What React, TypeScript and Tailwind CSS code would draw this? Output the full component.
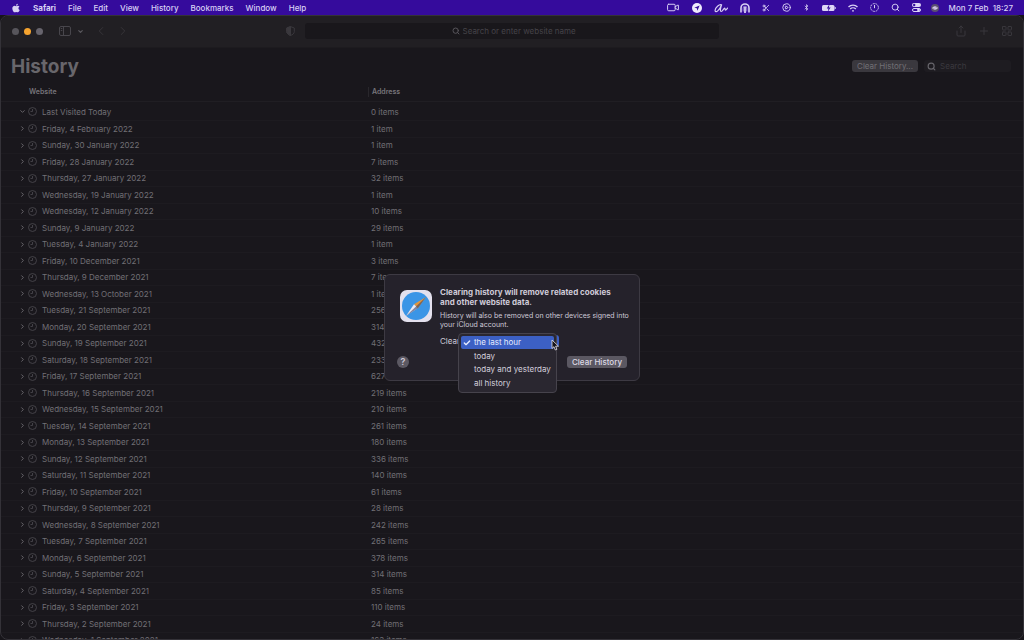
import type { ReactNode } from "react";
import {
  Bluetooth,
  Check,
  ChevronDown,
  ChevronLeft,
  ChevronRight,
  CirclePlay,
  History,
  LayoutGrid,
  Plus,
  Scissors,
  Search,
  Share,
  Video,
} from "lucide-react";
import { FaApple } from "react-icons/fa";

const menus = ["File", "Edit", "View", "History", "Bookmarks", "Window", "Help"];

const days: [string, number][] = [
  ["Last Visited Today", 0],
  ["Friday, 4 February 2022", 1],
  ["Sunday, 30 January 2022", 1],
  ["Friday, 28 January 2022", 7],
  ["Thursday, 27 January 2022", 32],
  ["Wednesday, 19 January 2022", 1],
  ["Wednesday, 12 January 2022", 10],
  ["Sunday, 9 January 2022", 29],
  ["Tuesday, 4 January 2022", 1],
  ["Friday, 10 December 2021", 3],
  ["Thursday, 9 December 2021", 7],
  ["Wednesday, 13 October 2021", 1],
  ["Tuesday, 21 September 2021", 256],
  ["Monday, 20 September 2021", 314],
  ["Sunday, 19 September 2021", 432],
  ["Saturday, 18 September 2021", 233],
  ["Friday, 17 September 2021", 627],
  ["Thursday, 16 September 2021", 219],
  ["Wednesday, 15 September 2021", 210],
  ["Tuesday, 14 September 2021", 261],
  ["Monday, 13 September 2021", 180],
  ["Sunday, 12 September 2021", 336],
  ["Saturday, 11 September 2021", 140],
  ["Friday, 10 September 2021", 61],
  ["Thursday, 9 September 2021", 28],
  ["Wednesday, 8 September 2021", 242],
  ["Tuesday, 7 September 2021", 265],
  ["Monday, 6 September 2021", 378],
  ["Sunday, 5 September 2021", 314],
  ["Saturday, 4 September 2021", 85],
  ["Friday, 3 September 2021", 110],
  ["Thursday, 2 September 2021", 24],
  ["Wednesday, 1 September 2021", 163],
];

const ranges = ["the last hour", "today", "today and yesterday", "all history"];

function MenuBar() {
  return (
    <header className="flex h-[15px] shrink-0 items-center bg-[#350b9c] pr-[11px] pl-[11px] text-[8px] leading-[14px] font-medium text-[#d8d0f4]">
      <nav className="flex items-center gap-3" aria-label="Menu bar">
        <button type="button" aria-label="Apple menu">
          <FaApple className="size-[10px]" />
        </button>
        <button type="button" className="font-bold">
          Safari
        </button>
        {menus.map((menu) => (
          <button key={menu} type="button">
            {menu}
          </button>
        ))}
      </nav>
      <div className="ml-auto flex items-center gap-3">
        <Video className="h-[13px] w-[14px]" strokeWidth={1.8} />
        <svg viewBox="0 0 10 10" className="size-[10px]">
          <circle cx="5" cy="5" r="5" fill="#efeafc" />
          <path d="M7.6 2.5 5.4 7.8 4.8 5.3 2.3 4.7z" fill="#350b9c" />
        </svg>
        <svg
          viewBox="0 0 14 10"
          className="h-[10px] w-[14px]"
          fill="none"
          stroke="currentColor"
          strokeWidth="1.2"
          strokeLinecap="round"
          strokeLinejoin="round"
        >
          <path d="M7.5 1.8C5.2.9 1.3 4.6 1.1 7.3c-.1 1.700 1.300 1.800 2.600.6C5.300 6.500 6.800 4 7.600 1.800 6.600 4.500 5.700 8.300 7.200 8.500c1.500.1 2.400-3.300 3.500-3.300.8.1-.1 1.800.8 1.900.7 0 1.200-.9 2-2" />
        </svg>
        <svg viewBox="0 0 10 10" className="size-[10px]" fill="none" stroke="currentColor">
          <path d="M1 9.500V5a4 4 0 0 1 8 0v4.500" strokeWidth="1.600" />
          <path d="M3.200 8.500V5a1.800 1.800 0 0 1 3.600 0v3.500" strokeWidth=".6" />
          <path d="M5 4v6" strokeWidth="1.800" />
        </svg>
        <Scissors className="size-2" strokeWidth={2.5} />
        <CirclePlay className="size-[9px]" strokeWidth={2.5} />
        <Bluetooth className="h-[9px] w-[7px]" strokeWidth={2.5} />
        <svg viewBox="0 0 14 8" className="h-2 w-[14px]">
          <rect x="0" y="1" width="12.500" height="6" rx="1.500" fill="#ddd5f7" />
          <path d="M13.200 3v2" stroke="#ddd5f7" />
          <path d="M7.500 0 4.800 4.500h1.700L5.600 8l3-4.500H6.900z" fill="#350b9c" />
        </svg>
        <svg viewBox="0 0 10 8" className="h-2 w-[10px]" fill="none" stroke="currentColor" strokeWidth="1.400">
          <path d="M.5 3a6.400 6.400 0 0 1 9 0M2.200 5a4 4 0 0 1 5.600 0" />
          <circle cx="5" cy="6.800" r=".9" fill="currentColor" stroke="none" />
        </svg>
        <svg viewBox="0 0 9 9" className="size-[9px]" fill="none" stroke="currentColor">
          <circle cx="4.500" cy="4.500" r="3.900" strokeWidth=".9" strokeDasharray="2 .7" />
          <path d="M4.500 2v3.200" />
        </svg>
        <Search className="size-[9px]" strokeWidth={2.5} />
        <div className="flex items-center gap-[10px]">
          <svg viewBox="0 0 9 9" className="size-[9px]">
            <rect x="0" y="0" width="9" height="4" rx="2" fill="#ddd5f7" />
            <circle cx="2.200" cy="2" r="1.200" fill="#350b9c" />
            <rect x=".5" y="5.500" width="8" height="3" rx="1.500" fill="none" stroke="#ddd5f7" />
            <circle cx="6.500" cy="7" r="1.400" fill="#ddd5f7" />
          </svg>
          <svg viewBox="0 0 8 8" className="size-2">
            <circle cx="4" cy="4" r="4" fill="#5a5070" />
            <circle cx="4" cy="4" r="2" fill="#b9a9cf" />
            <path d="M1 4.500C3 2 5 6 7 3.500" stroke="#e3d8f5" fill="none" />
          </svg>
          <time className="whitespace-pre">Mon 7 Feb  18:27</time>
        </div>
      </div>
    </header>
  );
}

function ToolButton({ label, children }: { label: string; children: ReactNode }) {
  return (
    <button type="button" aria-label={label} className="flex items-center justify-center">
      {children}
    </button>
  );
}

function Toolbar() {
  return (
    <div className="flex h-8 shrink-0 items-center border-b border-[#1d1b1f] bg-[#211f23] pb-px text-[#39373c]">
      <div className="flex w-[304px] shrink-0 items-center pl-[11px]">
        <div className="flex gap-[5px]">
          <button type="button" aria-label="Close" className="size-[7px] rounded-full bg-[#57555b]" />
          <button type="button" aria-label="Minimise" className="size-[7px] rounded-full bg-[#f5a32f]" />
          <button type="button" aria-label="Zoom" className="size-[7px] rounded-full bg-[#67646d]" />
        </div>
        <div className="ml-4 flex items-center gap-[6px]">
          <ToolButton label="Sidebar">
            <svg viewBox="0 0 12 10" className="h-[10px] w-3" fill="none" stroke="#48464c">
              <rect x=".5" y=".5" width="11" height="9" rx="1.500" />
              <path d="M4.500.5v9M1.800 2.500h1.500M1.800 4.500h1.500" />
            </svg>
          </ToolButton>
          <ToolButton label="Sidebar options">
            <ChevronDown className="size-[7px] text-[#5a585e]" strokeWidth={4} />
          </ToolButton>
        </div>
        <div className="ml-[10px] flex items-center gap-2">
          <ToolButton label="Back">
            <ChevronLeft className="size-[14px]" strokeWidth={1.5} />
          </ToolButton>
          <ToolButton label="Forward">
            <ChevronRight className="size-[14px]" strokeWidth={1.5} />
          </ToolButton>
        </div>
        <div className="mr-[10px] ml-auto">
          <ToolButton label="Privacy report">
            <svg viewBox="0 0 9 10" className="h-[10px] w-[9px]" stroke="#3a383d">
              <path d="M4.500.6 8.300 2v3.500c0 2-1.800 3.300-3.800 4-2-.7-3.800-2-3.800-4V2z" fill="none" />
              <path d="M4.500.6v8.900c-2-.7-3.800-2-3.800-4V2z" fill="#3a383d" />
            </svg>
          </ToolButton>
        </div>
      </div>
      <label className="flex h-4 min-w-0 flex-1 items-center justify-center gap-[3px] rounded-[3px] bg-[#19171b] pl-[6px]">
        <Search className="size-2 text-[#57555b]" strokeWidth={3} />
        <input
          type="text"
          aria-label="Address"
          placeholder="Search or enter website name"
          className="w-[116px] bg-transparent text-[8px] leading-3 outline-none placeholder:text-[#454349]"
        />
      </label>
      <div className="flex w-[304px] shrink-0 items-center justify-end gap-[11px] pr-[10px]">
        <ToolButton label="Share">
          <Share className="size-3" strokeWidth={2} />
        </ToolButton>
        <ToolButton label="New tab">
          <Plus className="size-3" strokeWidth={2} />
        </ToolButton>
        <ToolButton label="Tab overview">
          <LayoutGrid className="size-3" strokeWidth={2} />
        </ToolButton>
      </div>
    </div>
  );
}

function ClockIcon() {
  return (
    <svg viewBox="0 0 10 10" className="size-[9px]" fill="none" stroke="#4e4c52">
      <circle cx="5" cy="5" r="4.400" strokeWidth=".9" />
      <path d="M5 2.200V5H2.800" strokeWidth=".9" />
    </svg>
  );
}

function HistoryTable() {
  return (
    <table className="w-full table-fixed border-collapse text-[8px] text-[#716f75]">
      <thead>
        <tr className="h-[17px] border-b border-[#201e23] text-left text-[7px] leading-[10px] text-[#77757b]">
          <th className="w-[367px] p-0 pl-7 font-semibold">Website</th>
          <th className="p-0 font-semibold">
            <span className="block border-l border-[#29272c] pl-[3px]">Address</span>
          </th>
        </tr>
      </thead>
      <tbody>
        <tr className="h-[3px]">
          <td className="p-0" />
          <td className="p-0" />
        </tr>
        {days.map(([day, count], i) => (
          <tr key={day} className="h-4 border-b border-[#1d1b20] leading-[14px] odd:h-[17px]">
            <td className="p-0 pl-[18px]">
              <div className="flex items-center">
                <button type="button" aria-label={`Expand ${day}`}>
                  {i === 0 ? (
                    <ChevronDown className="size-[7px]" strokeWidth={3} />
                  ) : (
                    <ChevronRight className="size-[7px]" strokeWidth={3} />
                  )}
                </button>
                <span className="mr-[5px] ml-[2px]">
                  <ClockIcon />
                </span>
                {day}
              </div>
            </td>
            <td className="p-0 pl-[3px]">
              {count} {count === 1 ? "item" : "items"}
            </td>
          </tr>
        ))}
      </tbody>
    </table>
  );
}

function SafariIcon() {
  return (
    <svg viewBox="0 0 32 32" className="ml-[3px] size-8 shrink-0">
      <rect width="32" height="32" rx="7" fill="#e4e1ee" />
      <circle cx="16" cy="16" r="14" fill="#3b95e6" />
      <path d="M26 7 17.800 18.300 14 14.300z" fill="#e3963c" />
      <path d="M6 26 14 14.300 17.800 18.300z" fill="#eceaf5" />
      <path d="M26 7 6 26l11.800-7.700z" fill="#3a4168" fillOpacity=".6" />
    </svg>
  );
}

function RangeMenu() {
  return (
    <div
      role="menu"
      className="absolute -top-[1px] left-[18px] z-10 w-[99px] rounded-[4px] border border-[#46434c] bg-[#2a2730] p-[2px] text-[#d3cfdc]"
    >
      {ranges.map((range, i) => (
        <button
          key={range}
          type="button"
          role="menuitem"
          className="flex h-[13px] w-full items-center gap-[3px] rounded-[2px] pl-[2px] text-left leading-[13px] odd:mb-[1px] first:bg-[#3c60c4] first:text-[#e6ecff]"
        >
          <span className="w-2">{i === 0 && <Check className="size-2" strokeWidth={4} />}</span>
          {range}
        </button>
      ))}
    </div>
  );
}

function ClearDialog() {
  return (
    <section
      role="dialog"
      aria-labelledby="clear-title"
      className="flex w-64 gap-2 rounded-md border border-[#3d3a43] bg-[#25222b] pt-3 pr-2 pb-3 pl-3 text-[#cfcad8]"
    >
      <div className="flex flex-col justify-between pt-[3px]">
        <SafariIcon />
        <button
          type="button"
          aria-label="Help"
          className="flex size-3 items-center justify-center self-start rounded-full bg-[#5c5963] text-[9px] leading-3 font-semibold"
        >
          ?
        </button>
      </div>
      <div className="min-w-0 flex-1">
        <h2 id="clear-title" className="pr-4 text-[8px] leading-[10px] font-bold">
          Clearing history will remove related cookies and other website data.
        </h2>
        <p className="mt-1 text-[7px] leading-[9px]">
          History will also be removed on other devices signed into your iCloud account.
        </p>
        <div className="relative mt-[5px] flex items-center text-[8px] leading-[14px]">
          <label htmlFor="range" className="w-5">
            Clear
          </label>
          <select
            id="range"
            className="h-3 w-[99px] appearance-none rounded-[3px] bg-[#3c60c4] pl-[11px] leading-3 text-[#e8e6f2]"
          >
            {ranges.map((range) => (
              <option key={range}>{range}</option>
            ))}
          </select>
          <RangeMenu />
          <svg viewBox="0 0 8 12" className="absolute top-[5px] left-[111px] z-20 h-3 w-2">
            <path
              d="M1 1v8.500l2-1.800 1.300 3.300 1.600-.7-1.300-3.100H7.500z"
              fill="#17151b"
              stroke="#e6e4ec"
              strokeWidth=".8"
            />
          </svg>
        </div>
        <div className="mt-2 flex justify-end pr-1">
          <button
            type="button"
            className="h-3 w-[60px] rounded-[3px] bg-[#5b5862] text-[8px] leading-3 font-medium text-[#dedae6]"
          >
            Clear History
          </button>
        </div>
      </div>
    </section>
  );
}

export default function App() {
  return (
    <div className="flex h-screen flex-col overflow-hidden bg-[#17151a] font-['Inter',sans-serif]">
      <MenuBar />
      <main className="relative flex min-h-0 flex-1 flex-col overflow-hidden rounded-lg border border-[#343238] bg-[#19171c]">
        <Toolbar />
        <div className="flex h-9 shrink-0 items-center pr-3 pl-[10px]">
          <h1 className="pt-px text-[19px] leading-6 font-bold text-[#68666b]">History</h1>
          <button
            type="button"
            className="ml-auto h-3 w-[66px] rounded-[3px] bg-[#3a383e] text-[8px] leading-3 text-[#727076]"
          >
            Clear History...
          </button>
          <label className="ml-[6px] flex h-3 w-[87px] items-center gap-1 rounded-[3px] bg-[#1e1c21] pl-[3px]">
            <Search className="size-[9px] shrink-0 text-[#67656b]" strokeWidth={3} />
            <input
              type="search"
              aria-label="Search history"
              placeholder="Search"
              className="min-w-0 flex-1 bg-transparent text-[8px] leading-3 outline-none placeholder:text-[#3b393f]"
            />
          </label>
        </div>
        <HistoryTable />
        <div className="absolute inset-x-0 top-[258px] flex justify-center">
          <ClearDialog />
        </div>
      </main>
    </div>
  );
}
